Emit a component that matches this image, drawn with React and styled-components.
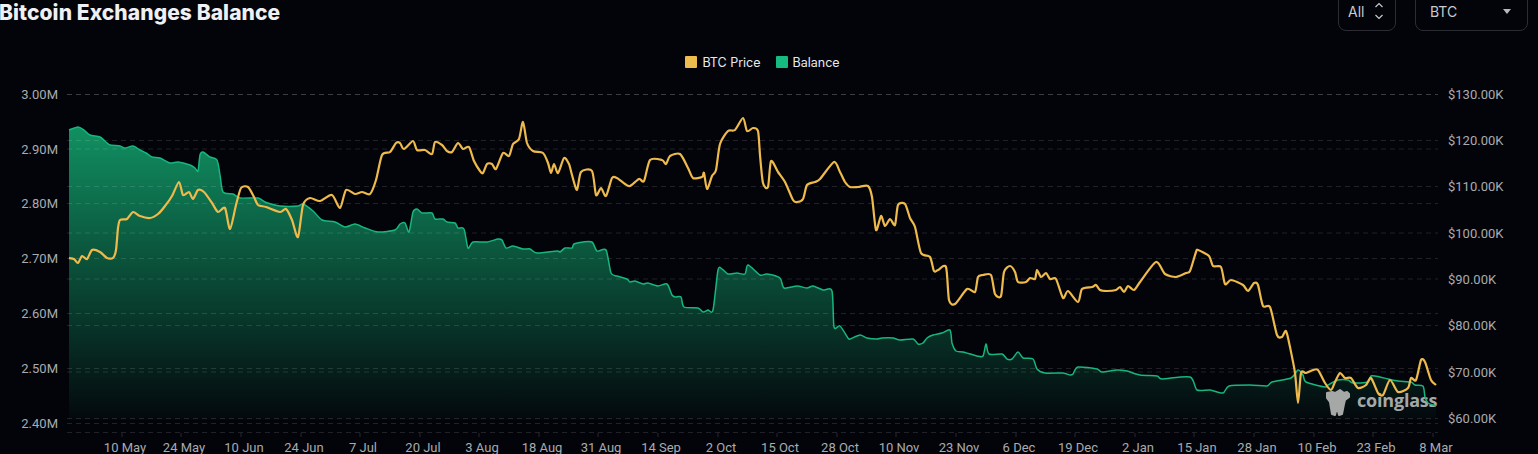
import React from 'react'
import styled, { createGlobalStyle } from 'styled-components'

const GlobalStyle = createGlobalStyle`
  html, body {
    margin: 0;
    background: #03040a;
  }
`

const Page = styled.div`
  width: 1538px;
  height: 454px;
  overflow: hidden;
  background: #03040a;
  font-family: Inter, "Liberation Sans", sans-serif;
`

const Header = styled.div`
  display: flex;
  align-items: flex-end;
  justify-content: space-between;
  height: 40px;
  margin-top: -9px;
  padding-right: 10px;
`

const Title = styled.h1`
  margin: 0 0 6px -1px;
  color: #eef0f4;
  font-size: 21px;
  font-weight: 800;
  letter-spacing: 0.08px;
  line-height: 24px;
`

const Controls = styled.div`
  display: flex;
  gap: 19px;
`

const Select = styled.div`
  display: flex;
  align-items: center;
  justify-content: space-between;
  box-sizing: border-box;
  width: ${props => props.$width}px;
  height: 40px;
  padding: 0 ${props => props.$right}px 0 ${props => props.$left}px;
  border: 1px solid #2b2d33;
  border-radius: 8px;
  color: #c9cacc;
  font-size: 14px;
`

const Legend = styled.div`
  display: flex;
  justify-content: center;
  gap: 15px;
  height: 49px;
  padding: 25px 13px 0 0;
  box-sizing: border-box;
`

const LegendItem = styled.div`
  display: flex;
  align-items: center;
  gap: 5px;
  height: 12px;
  color: #e8eaee;
  font-size: 12.5px;
`

const Swatch = styled.span`
  width: 12px;
  height: 12px;
  border-radius: 1px;
  background: ${props => props.$color};
`

const ChartSvg = styled.svg`
  display: block;
  width: 1538px;
  height: 374px;
`

const AxisText = styled.text`
  fill: #a9abae;
  font-family: Roboto, "Liberation Sans", sans-serif;
  font-size: 13px;
`

const BrandText = styled.text`
  fill: #a6a8a8;
  font-family: "Open Sans", "Liberation Sans", sans-serif;
  font-size: 18px;
  font-weight: 700;
  letter-spacing: -0.2px;
`

const leftAxis = [
  ['3.00M', 94.5], ['2.90M', 149], ['2.80M', 203.5], ['2.70M', 258.5],
  ['2.60M', 313.5], ['2.50M', 368.5], ['2.40M', 423.5],
]

const rightAxis = [
  ['$130.00K', 94.5], ['$120.00K', 140.5], ['$110.00K', 186.5], ['$100.00K', 233],
  ['$90.00K', 279], ['$80.00K', 325.5], ['$70.00K', 372], ['$60.00K', 418.5],
]

const dates = [
  ['10 May', 125], ['24 May', 184], ['10 Jun', 244], ['24 Jun', 304], ['7 Jul', 363],
  ['20 Jul', 423], ['3 Aug', 482], ['18 Aug', 542], ['31 Aug', 601], ['14 Sep', 661],
  ['2 Oct', 721], ['15 Oct', 780], ['28 Oct', 840], ['10 Nov', 899], ['23 Nov', 959],
  ['6 Dec', 1019], ['19 Dec', 1078], ['2 Jan', 1138], ['15 Jan', 1197], ['28 Jan', 1257],
  ['10 Feb', 1317], ['23 Feb', 1376], ['8 Mar', 1436],
]

const price = [
  [69,258],[74,259],[78,263],[82,256],[87,259],[92,250],[100,252],[107,258],[113,258],[116,250],[118,228],
  [120,220],[127,219],[133,212],[140,216],[150,218],[158,214],[165,206],[172,196],[179,182],[183,195],
  [189,192],[193,199],[198,190],[204,192],[212,203],[218,212],[225,208],[230,229],[236,205],[241,188],
  [248,187],[254,197],[258,205],[266,207],[280,212],[286,209],[292,220],[298,237],[303,205],[310,198],
  [320,201],[332,195],[340,208],[346,190],[355,194],[362,192],[370,194],[376,180],[382,155],[390,152],
  [396,143],[400,143],[404,149],[413,141],[417,150],[425,150],[432,154],[435,142],[442,145],[447,151],
  [452,152],[458,143],[463,149],[469,147],[474,161],[480,171],[483,173],[487,164],[492,164],[496,169],
  [503,153],[509,156],[513,144],[519,139],[523,122],[527,143],[533,151],[543,153],[548,163],[551,173],
  [554,164],[558,173],[564,158],[569,164],[572,175],[577,190],[581,172],[592,171],[596,195],[601,188],
  [606,196],[612,178],[617,178],[625,184],[630,186],[639,179],[644,181],[650,160],[662,160],[666,164],
  [670,156],[680,154],[688,168],[693,178],[702,177],[704,173],[707,189],[712,176],[716,170],[720,144],
  [728,131],[735,130],[743,118],[747,131],[753,128],[758,131],[760,155],[763,183],[768,187],[771,161],
  [778,172],[785,182],[793,200],[797,202],[803,199],[807,185],[815,182],[820,179],[834,162],[840,172],
  [845,182],[850,187],[858,187],[868,186],[872,197],[876,230],[881,216],[885,226],[890,219],[895,225],
  [898,205],[905,204],[910,218],[915,227],[921,253],[930,257],[934,271],[938,270],[946,267],[949,300],
  [955,304],[967,289],[975,292],[978,277],[983,275],[991,275],[995,294],[1001,296],[1004,272],[1010,266],
  [1015,272],[1018,282],[1026,282],[1030,278],[1035,279],[1037,270],[1041,277],[1046,273],[1050,279],
  [1056,279],[1063,298],[1068,291],[1078,302],[1082,289],[1092,287],[1096,285],[1100,290],[1107,291],
  [1116,290],[1120,287],[1124,292],[1128,286],[1134,290],[1140,282],[1156,262],[1165,274],[1176,277],
  [1186,273],[1190,271],[1196,252],[1198,250],[1209,256],[1213,266],[1221,267],[1225,284],[1231,280],
  [1243,285],[1248,291],[1254,283],[1258,285],[1263,306],[1270,307],[1277,335],[1282,337],[1286,331],
  [1290,347],[1295,373],[1298,403],[1301,373],[1306,373],[1313,370],[1318,370],[1325,383],[1331,390],
  [1335,382],[1340,373],[1345,378],[1351,378],[1358,388],[1366,385],[1371,378],[1378,393],[1383,395],
  [1390,380],[1398,392],[1408,388],[1411,378],[1416,380],[1421,360],[1425,362],[1431,380],[1436,385],
]

const balance = [
  [69,130],[78,127],[84,130],[90,135],[100,137],[106,142],[110,145],[120,146],[125,148],[133,146],[140,150],
  [146,153],[152,157],[160,158],[170,163],[178,162],[190,165],[195,168],[198,171],[200,155],[203,152],
  [210,157],[217,160],[220,175],[223,192],[233,194],[240,198],[258,198],[265,202],[280,206],[298,206],
  [303,204],[313,211],[322,220],[335,222],[345,227],[355,224],[365,228],[378,232],[395,230],[400,224],
  [405,223],[409,232],[413,212],[417,209],[422,213],[432,213],[435,219],[443,219],[447,222],[455,223],
  [458,228],[464,229],[468,248],[473,242],[487,242],[498,239],[502,240],[506,248],[513,246],[523,249],
  [530,249],[537,253],[557,251],[560,252],[565,248],[572,248],[574,244],[583,242],[592,242],[597,251],
  [606,250],[611,273],[617,276],[627,279],[630,282],[635,281],[643,284],[648,283],[658,286],[667,284],
  [672,295],[675,297],[681,297],[684,307],[698,308],[703,312],[708,310],[713,310],[718,270],[722,269],
  [728,274],[737,273],[745,274],[748,265],[760,275],[767,274],[780,278],[784,288],[797,286],[807,288],
  [813,286],[823,290],[832,291],[834,327],[840,326],[848,338],[850,339],[860,335],[867,338],[877,339],
  [882,338],[893,338],[900,340],[913,339],[918,344],[923,343],[927,338],[933,335],[942,333],[950,330],
  [952,343],[956,351],[963,352],[977,356],[983,356],[986,344],[989,354],[1002,354],[1007,359],[1012,359],
  [1018,352],[1023,358],[1033,359],[1037,369],[1045,373],[1063,373],[1070,375],[1073,374],[1078,367],
  [1097,369],[1102,372],[1117,370],[1127,371],[1140,375],[1157,376],[1162,379],[1190,377],[1197,390],
  [1210,390],[1223,393],[1229,386],[1250,385],[1267,386],[1272,382],[1291,378],[1298,370],[1303,375],
  [1306,382],[1325,387],[1328,385],[1338,380],[1348,380],[1353,383],[1368,382],[1371,376],[1380,377],
  [1388,379],[1398,381],[1411,382],[1415,385],[1423,386],[1425,397],[1428,403],[1436,406],
]

// catmull-rom through the traced points, lightly tensioned
const smoothPath = points => {
  let d = `M${points[0][0]} ${points[0][1]}`
  for (let i = 0; i < points.length - 1; i++) {
    const p0 = points[Math.max(i - 1, 0)]
    const p1 = points[i]
    const p2 = points[i + 1]
    const p3 = points[Math.min(i + 2, points.length - 1)]
    const c1x = p1[0] + (p2[0] - p0[0]) / 8
    const c1y = p1[1] + (p2[1] - p0[1]) / 8
    const c2x = p2[0] - (p3[0] - p1[0]) / 8
    const c2y = p2[1] - (p3[1] - p1[1]) / 8
    d += `C${c1x.toFixed(1)} ${c1y.toFixed(1)} ${c2x.toFixed(1)} ${c2y.toFixed(1)} ${p2[0]} ${p2[1]}`
  }
  return d
}

const GridLine = ({ y }) => (
  <line x1="67" x2="1438" y1={y} y2={y} stroke="#ffffff" strokeOpacity="0.12" strokeDasharray="5 4" />
)

const Chart = () => (
  <ChartSvg viewBox="0 80 1538 374">
    <defs>
      <linearGradient id="balanceFill" gradientUnits="userSpaceOnUse" x1="0" y1="127" x2="0" y2="420">
        <stop offset="0" stopColor="#16c784" stopOpacity="0.72" />
        <stop offset="1" stopColor="#16c784" stopOpacity="0.02" />
      </linearGradient>
    </defs>
    <path d={`${smoothPath(balance)}L1436 420L69 420Z`} fill="url(#balanceFill)" />
    {leftAxis.map(([label, y]) => <GridLine key={label} y={y} />)}
    {rightAxis.map(([label, y]) => <GridLine key={label} y={y} />)}
    <GridLine y={432.5} />
    {dates.map(([label, x]) => (
      <line key={label} x1={x - 3} x2={x - 3} y1="433" y2="437" stroke="#ffffff" strokeOpacity="0.15" />
    ))}
    {leftAxis.map(([label, y]) => (
      <AxisText key={label} x="58" y={y + 4.5} textAnchor="end">{label}</AxisText>
    ))}
    {rightAxis.map(([label, y]) => (
      <AxisText key={label} x="1448" y={y + 4.5}>{label}</AxisText>
    ))}
    {dates.map(([label, x]) => (
      <AxisText key={label} x={x} y="452" textAnchor="middle">{label}</AxisText>
    ))}
    <path
      d="M1327 393L1332 392L1335 393L1340 390L1344 393L1347 392L1349 394L1349 397L1345 400L1344 404L1343 409L1342 414L1339 415L1338 411L1336 411L1335 415L1332 414L1331 408L1330 402L1327 398Z"
      fill="#a6a8a8"
      stroke="#a6a8a8"
      strokeWidth="2"
      strokeLinejoin="round"
    />
    <BrandText x="1357" y="407">coinglass</BrandText>
    <path d={smoothPath(balance)} fill="none" stroke="#17b67d" strokeWidth="1.5" />
    <path d={smoothPath(price)} fill="none" stroke="#eeba4c" strokeWidth="2.2" strokeLinejoin="round" />
  </ChartSvg>
)

const App = () => (
  <Page>
    <GlobalStyle />
    <Header>
      <Title>Bitcoin Exchanges Balance</Title>
      <Controls>
        <Select $width={58} $left={9} $right={11}>
          All
          <svg width="10" height="18" viewBox="0 0 10 18" fill="none" stroke="#c9cacc" strokeWidth="1.2">
            <path d="M1.5 5L5 1.5L8.5 5" />
            <path d="M1.5 13L5 16.5L8.5 13" />
          </svg>
        </Select>
        <Select $width={113} $left={14} $right={16}>
          BTC
          <svg width="8" height="5" viewBox="0 0 8 5">
            <path d="M0 0H8L4 5Z" fill="#b8b9bb" />
          </svg>
        </Select>
      </Controls>
    </Header>
    <Legend>
      <LegendItem><Swatch $color="#eebc4e" />BTC Price</LegendItem>
      <LegendItem><Swatch $color="#16bc7f" />Balance</LegendItem>
    </Legend>
    <Chart />
  </Page>
)

export default App
